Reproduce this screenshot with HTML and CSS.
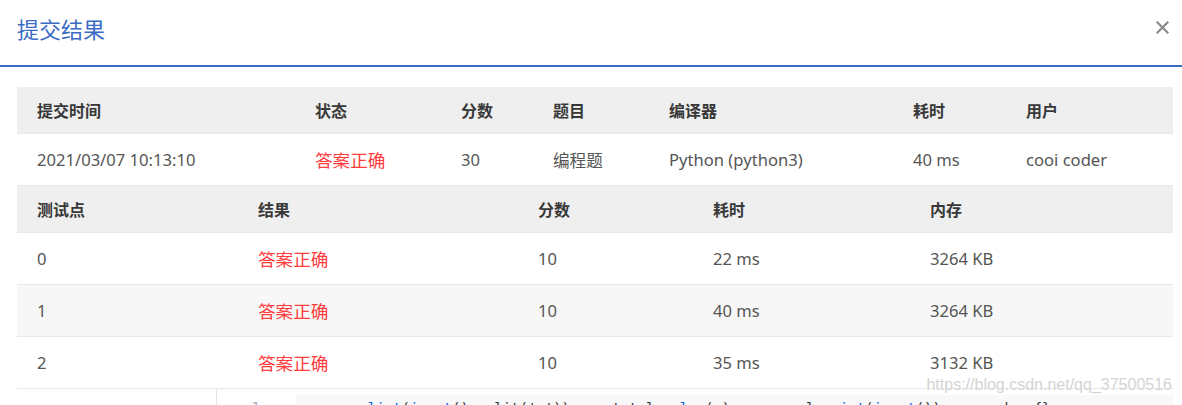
FILE: index.html
```html
<!DOCTYPE html>
<html lang="zh">
<head>
<meta charset="utf-8">
<title>提交结果</title>
<link rel="stylesheet" href="styles.css">
</head>
<body>
<div class="dialog">
  <div class="dialog-header">
    <h2 class="dialog-title">提交结果</h2>
    <span class="close" aria-label="关闭">
      <svg width="13" height="13" viewBox="0 0 13 13"><path d="M1.5 1.5 L11.5 11.5 M11.5 1.5 L1.5 11.5" stroke="#8a8a8a" stroke-width="2.2" stroke-linecap="square" fill="none"/></svg>
    </span>
  </div>
  <div class="dialog-body">
    <div class="table summary">
      <div class="row head">
        <div class="cell">提交时间</div>
        <div class="cell">状态</div>
        <div class="cell">分数</div>
        <div class="cell">题目</div>
        <div class="cell">编译器</div>
        <div class="cell">耗时</div>
        <div class="cell">用户</div>
      </div>
      <div class="row">
        <div class="cell">2021/03/07 10:13:10</div>
        <div class="cell ok">答案正确</div>
        <div class="cell">30</div>
        <div class="cell">编程题</div>
        <div class="cell">Python (python3)</div>
        <div class="cell">40 ms</div>
        <div class="cell">cooi coder</div>
      </div>
    </div>
    <div class="table cases">
      <div class="row head">
        <div class="cell">测试点</div>
        <div class="cell">结果</div>
        <div class="cell">分数</div>
        <div class="cell">耗时</div>
        <div class="cell">内存</div>
      </div>
      <div class="row">
        <div class="cell">0</div>
        <div class="cell ok">答案正确</div>
        <div class="cell">10</div>
        <div class="cell">22 ms</div>
        <div class="cell">3264 KB</div>
      </div>
      <div class="row stripe">
        <div class="cell">1</div>
        <div class="cell ok">答案正确</div>
        <div class="cell">10</div>
        <div class="cell">40 ms</div>
        <div class="cell">3264 KB</div>
      </div>
      <div class="row">
        <div class="cell">2</div>
        <div class="cell ok">答案正确</div>
        <div class="cell">10</div>
        <div class="cell">35 ms</div>
        <div class="cell">3132 KB</div>
      </div>
    </div>
    <div class="code-row">
      <div class="code-spacer"></div>
      <div class="code-box">
        <div class="gutter">1</div>
        <pre class="code">s = <span class="fn">list</span>(<span class="fn">input</span>().split(<span class="str">','</span>))     total = <span class="fn">len</span>(s)         l = <span class="fn">int</span>(<span class="fn">input</span>())       d = {}</pre>
      </div>
    </div>
  </div>
  <div class="watermark">https://blog.csdn.net/qq_37500516</div>
</div>
</body>
</html>
```

FILE: styles.css
```css
html, body {
  margin: 0;
  padding: 0;
  background: #fff;
  overflow: hidden;
}
body {
  font-family: "Segoe UI", "Noto Sans", "Noto Sans CJK SC", sans-serif;
  color: #555;
  width: 1182px;
  height: 405px;
}
.dialog {
  position: relative;
  height: 405px;
  overflow: hidden;
}
.dialog-header {
  height: 65px;
  border-bottom: 2px solid #3b6cc5;
  display: flex;
  align-items: center;
  justify-content: space-between;
  padding: 0 12px 0 17px;
  box-sizing: content-box;
}
.dialog-title {
  margin: 0;
  font-family: "Noto Sans CJK SC", sans-serif;
  font-weight: 400;
  font-size: 22px;
  color: #3b6cc5;
  line-height: 1;
  margin-top: -9px;
}
.close {
  display: flex;
  margin-top: -11px;
  margin-right: 1px;
}
.dialog-body {
  padding: 20px 9px 0 17px;
}
.table .row {
  display: grid;
  border-bottom: 1px solid #e8e8e8;
  align-items: center;
  height: 51px;
  font-size: 16.6px;
}
.table .row.head {
  background: #efefef;
  height: 46px;
  font-weight: 700;
  color: #383838;
}
.table .row.stripe {
  background: #f7f7f7;
}
.summary .row {
  grid-template-columns: 278px 146px 92px 116px 244px 113px 1fr;
}
.cases .row {
  grid-template-columns: 221px 280px 175px 217px 1fr;
}
.cell {
  padding-left: 20px;
  white-space: nowrap;
}
.head .cell {
  font-size: 16px;
}
.cell.ok {
  color: #ff3b3b;
  font-size: 17.6px;
}
.code-row {
  display: flex;
  height: 30px;
}
.code-spacer {
  width: 199px;
}
.code-box {
  flex: 1;
  display: flex;
  border-left: 1px solid #e3e3e3;
}
.gutter {
  width: 79px;
  padding-top: 10px;
  padding-right: 36px;
  box-sizing: border-box;
  text-align: right;
  font-family: "DejaVu Sans Mono", monospace;
  font-size: 14px;
  color: #aaa;
}
.code {
  flex: 1;
  margin: 6px 0 0 0;
  background: #f6f8fa;
  padding: 5px 0 0 38px;
  font-family: "DejaVu Sans Mono", monospace;
  font-size: 14px;
  color: #333;
}
.code .fn { color: #0b64d6; }
.code .str { color: #333; }
.watermark {
  position: absolute;
  right: 10px;
  top: 376px;
  font-family: "Liberation Sans", Arial, sans-serif;
  font-size: 16px;
  color: #d4d4d4;
  text-shadow: 0 0 1px #fff;
}
```
